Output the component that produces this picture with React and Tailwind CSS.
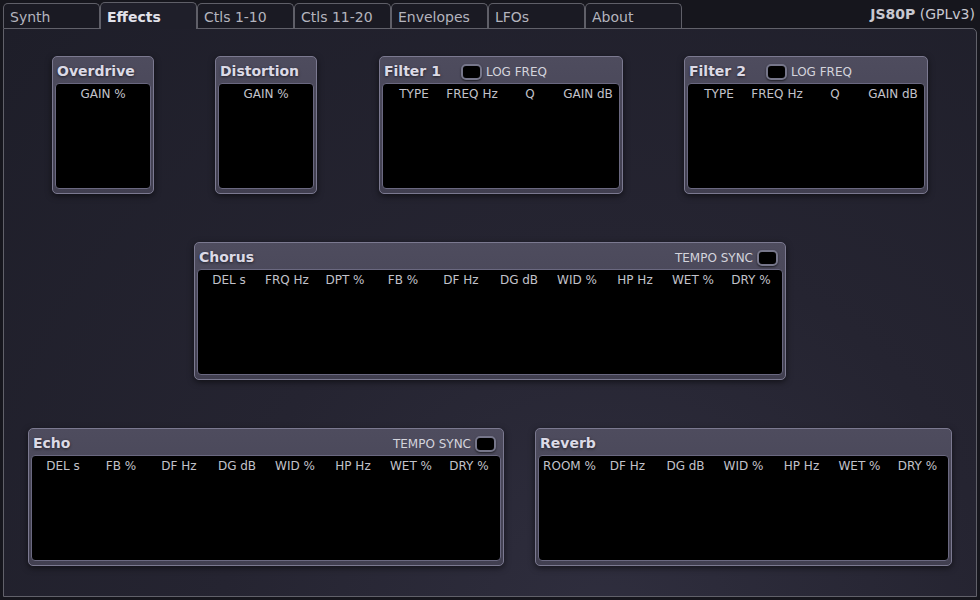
import React from "react";

const tabs = ["Synth", "Effects", "Ctls 1-10", "Ctls 11-20", "Envelopes", "LFOs", "About"];

function Check() {
  return (
    <span className="inline-block w-[21px] h-[16px] rounded-[5px] bg-black border-2 border-[#76768a] shadow-[0_1px_2px_rgba(0,0,0,0.6)]" />
  );
}

function Box({ title, w, cols, left, right, className = "" }) {
  return (
    <div
      className={`h-[138px] rounded-[5px] border border-[#7b7990] bg-gradient-to-b from-[#4e4c5e] to-[#413f50] shadow-[0_2px_6px_rgba(0,0,0,0.55)] flex flex-col shrink-0 ${className}`}
      style={{ width: w }}
    >
      <div className="h-[26px] shrink-0 flex items-center pt-[3px] pl-[4px] pr-[7px]">
        <span className="text-[14px] leading-[17px] font-bold text-[#dcdae6] [text-shadow:0_1px_3px_rgba(0,0,0,0.6)]">
          {title}
        </span>
        {left}
        {right && <div className="ml-auto flex items-center">{right}</div>}
      </div>
      <div className="mx-[2px] mb-[4px] flex-1 rounded-[4px] bg-black border border-[#6a6880] flex justify-center pt-[3px]">
        {cols.map((c) => (
          <div key={c} className="w-[58px] text-center text-[12px] leading-[14px] text-[#c2c2ca] whitespace-nowrap">
            {c}
          </div>
        ))}
      </div>
    </div>
  );
}

const logFreq = (
  <div className="ml-[20px] flex items-center">
    <Check />
    <span className="ml-[4px] text-[12px] text-[#d4d4dc]">LOG FREQ</span>
  </div>
);

const tempo = (
  <>
    <span className="mr-[4px] text-[12px] text-[#d4d4dc]">TEMPO SYNC</span>
    <Check />
  </>
);

export default function App() {
  return (
    <div className="w-[980px] h-[600px] bg-[#16161d] overflow-hidden font-['DejaVu_Sans',sans-serif]">
      <div className="h-[28px] flex items-end pl-[3px]">
        {tabs.map((t) =>
          t === "Effects" ? (
            <div
              key={t}
              className="relative w-[97px] h-[26px] border border-b-0 border-[#5f5f68] rounded-t-[5px] bg-[#1f1f2a] pl-[6px] pt-[6px] text-[14px] leading-[17px] font-bold text-[#e2e2ea] z-10"
            >
              {t}
              <span className="absolute left-0 right-0 -bottom-[1px] h-[1px] bg-[#1f1f2a]" />
            </div>
          ) : (
            <div
              key={t}
              className="w-[97px] h-[25px] border border-b-0 border-[#5f5f68] rounded-t-[5px] bg-[#1a1a23] pl-[6px] pt-[5px] text-[14px] leading-[17px] text-[#b4b4be]"
            >
              {t}
            </div>
          )
        )}
        <div className="ml-auto self-center pr-[5px] pt-[1px] text-[14px] leading-[17px] text-[#c8c8d0]">
          <span className="font-bold">JS80P</span> (GPLv3)
        </div>
      </div>
      <div className="ml-[3px] w-[974px] h-[569px] border border-[#61616a] rounded-tr-[5px] bg-[radial-gradient(ellipse_at_62%_105%,#2f2e3e_0%,#252431_45%,#1e1e29_100%)]">
        <div className="mt-[27px] flex">
          <Box className="ml-[48px]" title="Overdrive" w={102} cols={["GAIN %"]} />
          <Box className="ml-[61px]" title="Distortion" w={102} cols={["GAIN %"]} />
          <Box className="ml-[62px]" title="Filter 1" w={244} left={logFreq} cols={["TYPE", "FREQ Hz", "Q", "GAIN dB"]} />
          <Box className="ml-[61px]" title="Filter 2" w={244} left={logFreq} cols={["TYPE", "FREQ Hz", "Q", "GAIN dB"]} />
        </div>
        <div className="mt-[48px] flex">
          <Box
            className="ml-[190px]"
            title="Chorus"
            w={592}
            right={tempo}
            cols={["DEL s", "FRQ Hz", "DPT %", "FB %", "DF Hz", "DG dB", "WID %", "HP Hz", "WET %", "DRY %"]}
          />
        </div>
        <div className="mt-[48px] flex">
          <Box
            className="ml-[24px]"
            title="Echo"
            w={476}
            right={tempo}
            cols={["DEL s", "FB %", "DF Hz", "DG dB", "WID %", "HP Hz", "WET %", "DRY %"]}
          />
          <Box
            className="ml-[31px]"
            title="Reverb"
            w={417}
            cols={["ROOM %", "DF Hz", "DG dB", "WID %", "HP Hz", "WET %", "DRY %"]}
          />
        </div>
      </div>
    </div>
  );
}
